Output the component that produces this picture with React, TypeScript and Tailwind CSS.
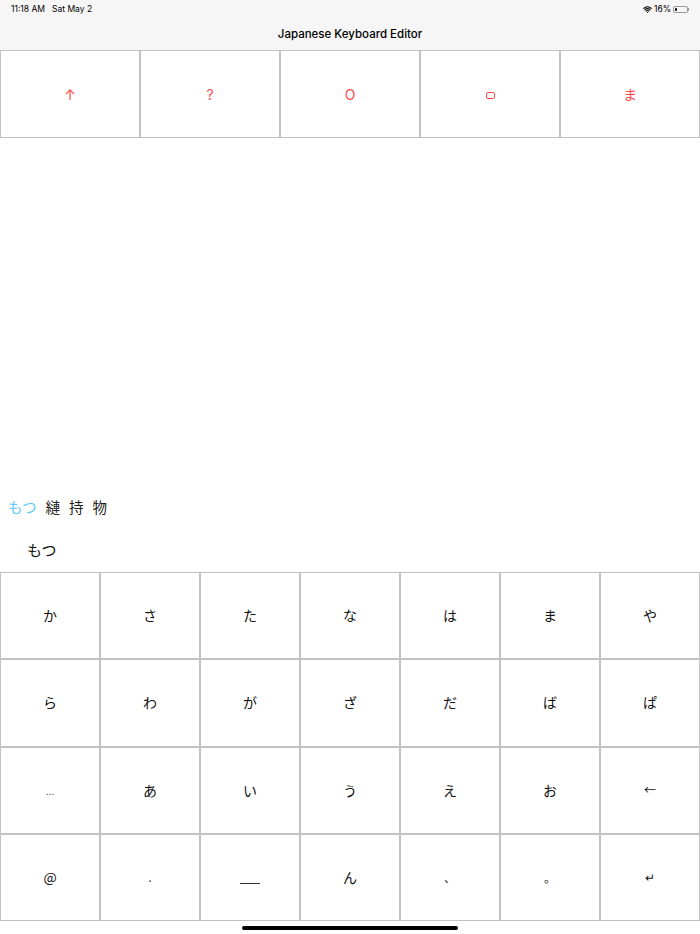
import { Wifi } from 'lucide-react';

const topKeys = ['↑', '?', 'O', 'box', 'ま'];

const keyRows = [
  ['か', 'さ', 'た', 'な', 'は', 'ま', 'や'],
  ['ら', 'わ', 'が', 'ざ', 'だ', 'ば', 'ぱ'],
  ['...', 'あ', 'い', 'う', 'え', 'お', '←'],
  ['@', '.', '＿', 'ん', '、', '。', '↵'],
];

const candidates = ['縺', '持', '物'];

function TopKey({ label }: { label: string }) {
  return (
    <div className="bg-white flex items-center justify-center text-[#ff4a4a] text-[14px]">
      {label === 'box' ? (
        <span className="mt-[3px] block w-[9px] h-[7px] border border-[#ff4a4a] rounded-[2px]" />
      ) : (
        <span>{label}</span>
      )}
    </div>
  );
}

export default function App() {
  return (
    <div
      className="w-[700px] h-[934px] bg-white relative overflow-hidden flex flex-col"
      style={{ fontFamily: 'Inter, "Noto Sans CJK JP", sans-serif' }}
    >
      {/* status + nav bar */}
      <div className="h-[50px] bg-[#f6f6f6] flex flex-col shrink-0">
        <div className="h-[18px] flex items-center justify-between px-[11px] pt-[1px] text-[8.5px] text-black">
          <div className="flex gap-[7px]">
            <span>11:18 AM</span>
            <span>Sat May 2</span>
          </div>
          <div className="flex items-center gap-[2px]">
            <Wifi size={9} strokeWidth={3} />
            <span>16%</span>
            <div className="flex items-center">
              <div className="w-[15px] h-[7px] rounded-[2px] border border-[#9a9a9a] p-[1px]">
                <div className="w-[2px] h-full bg-black rounded-[1px]" />
              </div>
              <div className="w-[1px] h-[3px] bg-[#9a9a9a]" />
            </div>
          </div>
        </div>
        <div className="flex-1 flex items-center justify-center pt-[1px] text-[11.5px] font-medium text-black">
          Japanese Keyboard Editor
        </div>
      </div>

      {/* top action row */}
      <div className="grid grid-cols-5 gap-[2px] bg-[#c2c2c2] p-[1px] h-[88px] shrink-0">
        {topKeys.map((k, i) => (
          <TopKey key={i} label={k} />
        ))}
      </div>

      <div className="flex-1" />

      {/* candidates */}
      <div className="flex items-center gap-[9px] pl-[8px] h-[24px] text-[14.5px] text-[#222]" style={{ fontFamily: '"Noto Sans CJK JP", sans-serif' }}>
        <span className="text-[#5ac8fa]">もつ</span>
        {candidates.map(c => (
          <span key={c}>{c}</span>
        ))}
      </div>

      <div className="h-[19px]" />

      {/* composing text */}
      <div className="pl-[27px] h-[24px] flex items-center text-[15px] text-[#111]" style={{ fontFamily: '"Noto Sans CJK JP", sans-serif' }}>
        もつ
      </div>

      <div className="h-[10px]" />

      {/* keyboard */}
      <div
        className="grid grid-cols-7 grid-rows-4 gap-[2px] bg-[#c2c2c2] p-[1px] h-[349px] shrink-0"
        style={{ fontFamily: '"Noto Sans CJK JP", sans-serif' }}
      >
        {keyRows.flat().map((k, i) => (
          <div key={i} className="bg-white flex items-center justify-center text-[14px] text-[#111]">
            {k === '...' ? (
              <span className="text-[10px] text-[#444]">...</span>
            ) : k === '.' ? (
              <span className="text-[12px] text-[#444]">.</span>
            ) : k === '＿' ? (
              <span className="block w-[20px] h-[1.5px] bg-[#333] mt-[12px]" />
            ) : k === '、' || k === '。' ? (
              <span className="text-[12px] mt-[2px] text-[#333]">{k}</span>
            ) : k === '←' || k === '↵' ? (
              <span className="text-[12px]">{k}</span>
            ) : (
              <span>{k}</span>
            )}
          </div>
        ))}
      </div>

      {/* home indicator */}
      <div className="h-[13px] flex items-center justify-center shrink-0">
        <div className="w-[216px] h-[4px] rounded-full bg-black" />
      </div>
    </div>
  );
}
